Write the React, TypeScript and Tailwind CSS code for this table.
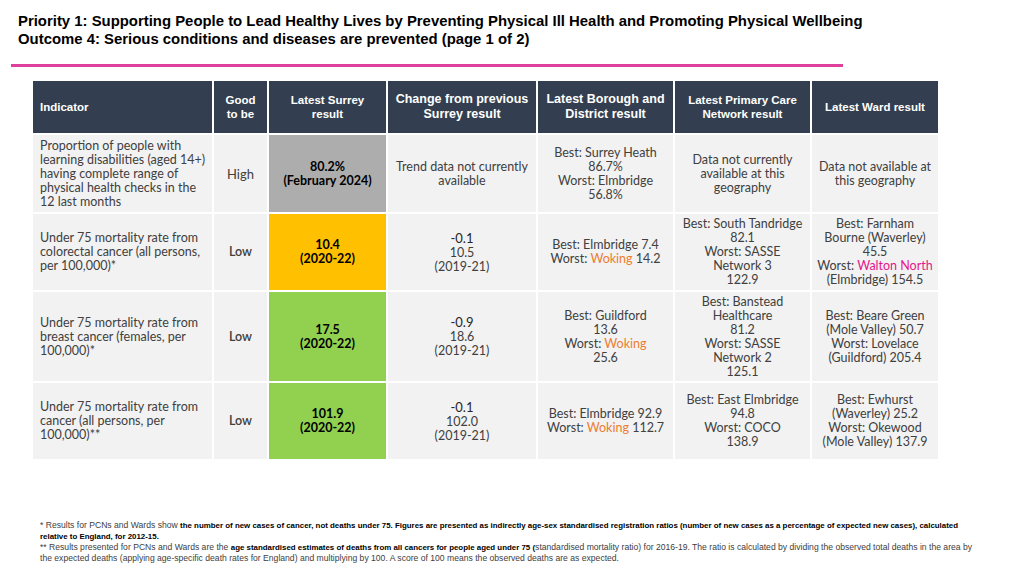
import React from "react";

const body = { fontFamily: "Lato, 'Open Sans', sans-serif" };
const head = { fontFamily: "'Liberation Sans', Arial, sans-serif" };

const W = () => <span className="text-[#ed7d31]">Woking</span>;

function Cell({
  children,
  className = "",
}: {
  children: React.ReactNode;
  className?: string;
}) {
  return (
    <div
      className={
        "flex items-center justify-center text-center bg-[#f2f2f2] text-[#404040] text-[12.5px] leading-[14px] " +
        className
      }
      style={body}
    >
      <div>{children}</div>
    </div>
  );
}

function Ind({ children }: { children: React.ReactNode }) {
  return (
    <div
      className="flex items-center bg-[#f2f2f2] text-[#404040] text-[12.5px] leading-[14px] pl-[7px] pr-1"
      style={body}
    >
      <div>{children}</div>
    </div>
  );
}

function H({
  children,
  className = "",
  left = false,
}: {
  children: React.ReactNode;
  className?: string;
  left?: boolean;
}) {
  return (
    <div
      className={
        "flex items-center bg-[#333f50] text-white font-bold " +
        (left ? "justify-start pl-[7px] " : "justify-center text-center ") +
        className
      }
      style={head}
    >
      <div>{children}</div>
    </div>
  );
}

function Val({ bg, a, b }: { bg: string; a: string; b: string }) {
  return (
    <div
      className={"flex items-center justify-center text-center text-black font-bold text-[12.5px] leading-[14px] " + bg}
      style={body}
    >
      <div>
        {a}
        <br />
        {b}
      </div>
    </div>
  );
}

function Chg({ a, b, c }: { a: string; b: string; c: string }) {
  return (
    <Cell>
      <span className="text-[#262626] text-[13px]">{a}</span>
      <br />
      {b}
      <br />
      {c}
    </Cell>
  );
}

const R = ({ children }: { children: React.ReactNode }) => (
  <span className="text-[8.6px]">{children}</span>
);

export default function App() {
  return (
    <div className="w-[1024px] h-[576px] bg-white relative overflow-hidden">
      <div
        className="pt-[12px] pl-[18px] text-[14.9px] leading-[18px] font-bold text-black"
        style={head}
      >
        <div>
          Priority 1: Supporting People to Lead Healthy Lives by Preventing Physical Ill Health and Promoting Physical
          Wellbeing
        </div>
        <div>Outcome 4: Serious conditions and diseases are prevented (page 1 of 2)</div>
      </div>
      <div className="mt-[16px] ml-[11px] w-[832px] h-[3px] bg-[#df3f9d]" />

      <div
        className="ml-[33px] mt-[14px] grid gap-x-[2px] gap-y-[2px] grid-cols-[179px_53px_117px_148px_135px_135px_126px] grid-rows-[52px_77px_76px_89px_76px]"
      >
        <H left className="text-[11.5px] leading-[14px]">Indicator</H>
        <H className="text-[11.5px] leading-[14px]">
          Good
          <br />
          to be
        </H>
        <H className="text-[11.5px] leading-[14px]">
          Latest Surrey
          <br />
          result
        </H>
        <H className="text-[12.5px] leading-[15px]">
          Change from previous
          <br />
          Surrey result
        </H>
        <H className="text-[12.5px] leading-[15px]">
          Latest Borough and
          <br />
          District result
        </H>
        <H className="text-[11.5px] leading-[14px]">
          Latest Primary Care
          <br />
          Network result
        </H>
        <H className="text-[11.5px] leading-[14px]">Latest Ward result</H>

        {/* Row 1 */}
        <Ind>
          Proportion of people with
          <br />
          learning disabilities (aged 14+)
          <br />
          having complete range of
          <br />
          physical health checks in the
          <br />
          12 last months
        </Ind>
        <Cell className="text-[#262626] text-[13px]">High</Cell>
        <Val bg="bg-[#adadad]" a="80.2%" b="(February 2024)" />
        <Cell>
          Trend data not currently
          <br />
          available
        </Cell>
        <Cell>
          Best: Surrey Heath
          <br />
          86.7%
          <br />
          Worst: Elmbridge
          <br />
          56.8%
        </Cell>
        <Cell>
          Data not currently
          <br />
          available at this
          <br />
          geography
        </Cell>
        <Cell>
          Data not available at
          <br />
          this geography
        </Cell>

        {/* Row 2 */}
        <Ind>
          Under 75 mortality rate from
          <br />
          colorectal cancer (all persons,
          <br />
          per 100,000)*
        </Ind>
        <Cell className="text-[#262626] font-semibold">Low</Cell>
        <Val bg="bg-[#ffc000]" a="10.4" b="(2020-22)" />
        <Chg a="-0.1" b="10.5" c="(2019-21)" />
        <Cell>
          Best: Elmbridge 7.4
          <br />
          Worst: <W /> 14.2
        </Cell>
        <Cell>
          Best: South Tandridge
          <br />
          82.1
          <br />
          Worst: SASSE
          <br />
          Network 3
          <br />
          122.9
        </Cell>
        <Cell>
          Best: Farnham
          <br />
          Bourne (Waverley)
          <br />
          45.5
          <br />
          Worst: <span className="text-[#e6168a]">Walton North</span>
          <br />
          (Elmbridge) 154.5
        </Cell>

        {/* Row 3 */}
        <Ind>
          Under 75 mortality rate from
          <br />
          breast cancer (females, per
          <br />
          100,000)*
        </Ind>
        <Cell className="text-[#262626] font-semibold">Low</Cell>
        <Val bg="bg-[#92d050]" a="17.5" b="(2020-22)" />
        <Chg a="-0.9" b="18.6" c="(2019-21)" />
        <Cell>
          Best: Guildford
          <br />
          13.6
          <br />
          Worst: <W />
          <br />
          25.6
        </Cell>
        <Cell>
          Best: Banstead
          <br />
          Healthcare
          <br />
          81.2
          <br />
          Worst: SASSE
          <br />
          Network 2
          <br />
          125.1
        </Cell>
        <Cell>
          Best: Beare Green
          <br />
          (Mole Valley) 50.7
          <br />
          Worst: Lovelace
          <br />
          (Guildford) 205.4
        </Cell>

        {/* Row 4 */}
        <Ind>
          Under 75 mortality rate from
          <br />
          cancer (all persons, per
          <br />
          100,000)**
        </Ind>
        <Cell className="text-[#262626] font-semibold">Low</Cell>
        <Val bg="bg-[#92d050]" a="101.9" b="(2020-22)" />
        <Chg a="-0.1" b="102.0" c="(2019-21)" />
        <Cell>
          Best: Elmbridge 92.9
          <br />
          Worst: <W /> 112.7
        </Cell>
        <Cell>
          Best: East Elmbridge
          <br />
          94.8
          <br />
          Worst: COCO
          <br />
          138.9
        </Cell>
        <Cell>
          Best: Ewhurst
          <br />
          (Waverley) 25.2
          <br />
          Worst: Okewood
          <br />
          (Mole Valley) 137.9
        </Cell>
      </div>

      <div
        className="absolute left-[40px] top-[520px] text-[7.9px] leading-[11px] text-[#404040] whitespace-nowrap"
        style={{ fontFamily: "'Liberation Sans', Arial, sans-serif" }}
      >
        <div>
          <R>* Results for PCNs and Wards show </R>
          <b className="text-black">
            the number of new cases of cancer, not deaths under 75. Figures are presented as indirectly age-sex
            standardised registration ratios (number of new cases as a percentage of expected new cases), calculated
          </b>
        </div>
        <div>
          <b className="text-black">relative to England, for 2012-15.</b>
        </div>
        <div>
          <R>** Results presented for PCNs and Wards are the </R>
          <b className="text-black">
            age standardised estimates of deaths from all cancers for people aged under 75 (
          </b>
          <R>
            standardised mortality ratio) for 2016-19. The ratio is calculated by dividing the observed total deaths
            in the area by
          </R>
        </div>
        <div>
          <R>
            the expected deaths (applying age-specific death rates for England) and multiplying by 100. A score of 100
            means the observed deaths are as expected.
          </R>
        </div>
      </div>
    </div>
  );
}
